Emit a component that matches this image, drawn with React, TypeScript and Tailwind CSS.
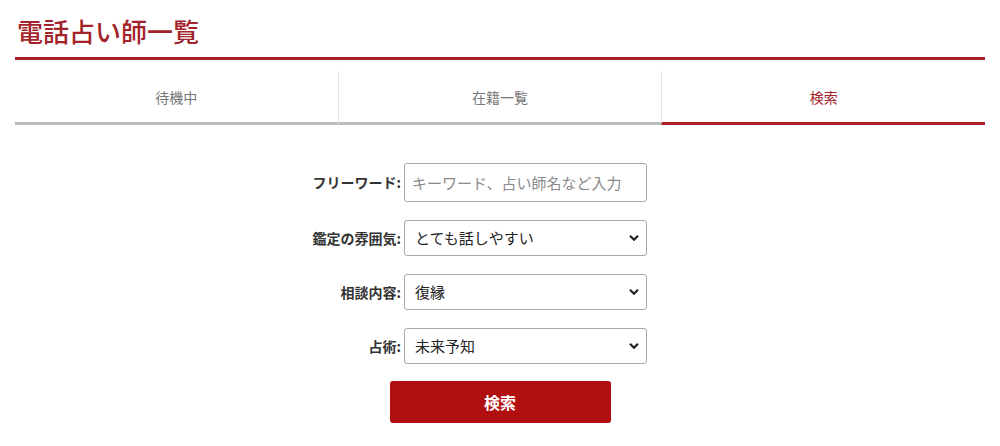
import { useState } from "react";

const tabs = ["待機中", "在籍一覧", "検索"];

const selects = [
    { label: "鑑定の雰囲気", value: "とても話しやすい", options: ["とても話しやすい", "優しい", "落ち着いている"] },
    { label: "相談内容", value: "復縁", options: ["復縁", "恋愛", "仕事"] },
    { label: "占術", value: "未来予知", options: ["未来予知", "タロット", "霊感"] },
];

function Chevron() {
    return (
        <svg viewBox="0 0 10 7" className="pointer-events-none absolute right-[8px] top-1/2 h-[7px] w-[10px] -translate-y-1/2">
            <path d="M1 1.2 L5 5.2 L9 1.2" fill="none" stroke="#222" strokeWidth="2.2" />
        </svg>
    );
}

export default function App() {
    const [active, setActive] = useState(2);

    return (
        <div className="min-h-[446px] bg-white px-[15px] pt-[13px] font-['Noto_Sans_CJK_JP','Noto_Sans',sans-serif] text-[#333]">
            <h1 className="pl-[2px] text-[26px] font-medium leading-[36px] text-[#a3242a]">電話占い師一覧</h1>
            <div className="mt-[8px] h-[3px] bg-[#a82228]" />

            <div className="mt-[11px] flex">
                {tabs.map((tab, i) => (
                    <button
                        key={tab}
                        onClick={() => setActive(i)}
                        className={
                            "flex h-[54px] flex-1 items-center justify-center border-b-[3px] pt-[1px] text-[14px] " +
                            (i === active ? "border-[#a82228] text-[#a3242a]" : "border-[#bdbdbd] text-[#777]") +
                            (i > 0 ? " border-l border-l-[#e6e6e6]" : "")
                        }
                    >
                        {tab}
                    </button>
                ))}
            </div>

            <form className="mx-auto mt-[38px] flex w-[600px] flex-col gap-[18px]" onSubmit={(e) => e.preventDefault()}>
                <div className="flex items-center">
                    <label className="w-[204px] pr-[3px] text-right text-[14px] font-bold text-[#333]">フリーワード:</label>
                    <input
                        type="text"
                        placeholder="キーワード、占い師名など入力"
                        className="h-[39px] w-[243px] rounded-[3px] border border-[#a9a9a9] px-[7px] text-[15px] text-[#222] placeholder:text-[#8a8a8a]"
                    />
                </div>

                {selects.map((s) => (
                    <div key={s.label} className="flex items-center">
                        <label className="w-[204px] pr-[3px] text-right text-[14px] font-bold text-[#333]">{s.label}:</label>
                        <div className="relative w-[243px]">
                            <select
                                defaultValue={s.value}
                                className="h-[36px] w-full appearance-none rounded-[3px] border border-[#a9a9a9] bg-white pl-[10px] text-[15px] text-[#222]"
                            >
                                {s.options.map((o) => (
                                    <option key={o}>{o}</option>
                                ))}
                            </select>
                            <Chevron />
                        </div>
                    </div>
                ))}

                <button
                    type="submit"
                    className="mx-auto -mt-[1px] h-[42px] w-[221px] rounded-[3px] bg-[#b10f10] text-[16px] font-bold text-white"
                >
                    検索
                </button>
            </form>
        </div>
    );
}
